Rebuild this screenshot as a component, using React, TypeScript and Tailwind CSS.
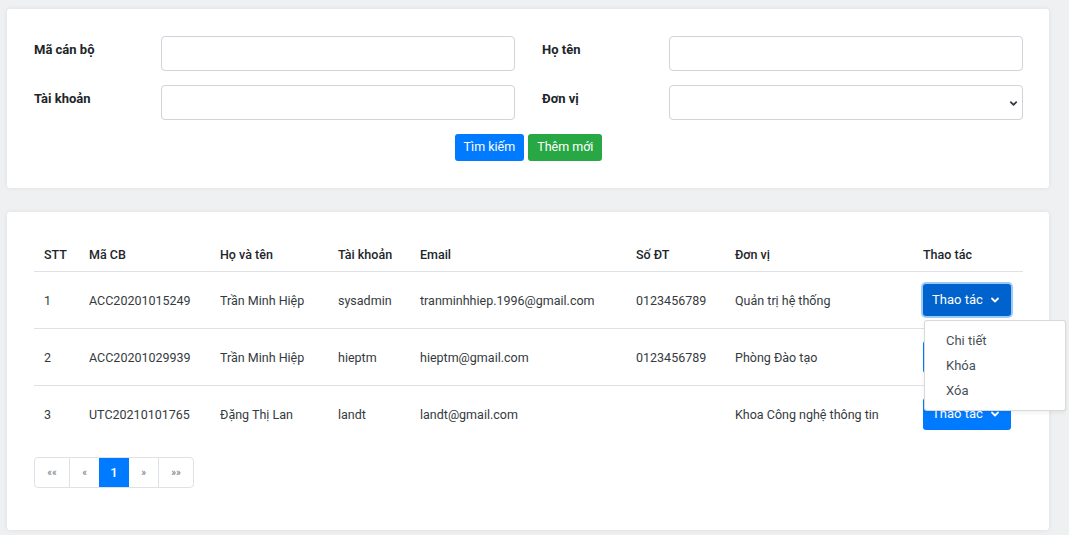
import React from "react";

const rows = [
  { stt: "1", ma: "ACC20201015249", ten: "Trần Minh Hiệp", tk: "sysadmin", email: "tranminhhiep.1996@gmail.com", sdt: "0123456789", dv: "Quản trị hệ thống" },
  { stt: "2", ma: "ACC20201029939", ten: "Trần Minh Hiệp", tk: "hieptm", email: "hieptm@gmail.com", sdt: "0123456789", dv: "Phòng Đào tạo" },
  { stt: "3", ma: "UTC20210101765", ten: "Đặng Thị Lan", tk: "landt", email: "landt@gmail.com", sdt: "", dv: "Khoa Công nghệ thông tin" },
];

const Chevron = () => (
  <svg width="10" height="10" viewBox="0 0 10 10" fill="none" stroke="white" strokeWidth="1.8" strokeLinecap="round" strokeLinejoin="round">
    <path d="M2 3.5 L5 6.5 L8 3.5" />
  </svg>
);

function ActionButton({ active }: { active?: boolean }) {
  return (
    <button
      className={
        active
          ? "h-[32px] w-[88px] rounded-[3px] bg-[#0062cc] text-white text-[13px] flex items-center pl-[9px] gap-[7px] shadow-[0_0_0_2px_#9ccaf8]"
          : "h-[32px] w-[88px] rounded-[3px] bg-[#007bff] text-white text-[13px] flex items-center pl-[9px] gap-[7px]"
      }
    >
      <span>Thao tác</span>
      <Chevron />
    </button>
  );
}

const colW = ["w-[45px]", "w-[131px]", "w-[118px]", "w-[82px]", "w-[216px]", "w-[99px]", "w-[188px]", "w-[110px]"];

export default function App() {
  return (
    <div className="min-h-[535px] bg-[#eef0f1] pt-[9px] pb-[5px]" style={{ fontFamily: "Roboto, 'Noto Sans', sans-serif" }}>
      {/* Search card */}
      <div className="ml-[7px] w-[1042px] bg-white rounded-[3px] shadow-[0_0_5px_rgba(0,0,0,0.08)] pt-[27px] pb-[27px] pl-[27px] pr-[26px]">
        <div className="grid grid-cols-2 gap-x-[27px] gap-y-[14px]">
          {[
            ["Mã cán bộ", false],
            ["Họ tên", false],
            ["Tài khoản", false],
            ["Đơn vị", true],
          ].map(([label, isSelect]) => (
            <div key={label as string} className="flex">
              <div className="w-[127px] pt-[4px] text-[13px] font-bold text-[#212529]">
                {label}
              </div>
              <div className="relative h-[35px] flex-1 rounded-[4px] border border-[#ced4da] bg-white">
                {isSelect ? (
                  <svg className="absolute right-[4px] top-[13px]" width="9" height="9" viewBox="0 0 10 10" fill="none" stroke="#343a40" strokeWidth="2" strokeLinecap="round" strokeLinejoin="round">
                    <path d="M2 3.5 L5 6.5 L8 3.5" />
                  </svg>
                ) : null}
              </div>
            </div>
          ))}
        </div>
        <div className="mt-[14px] flex justify-center gap-[4px]">
          <button className="h-[27px] px-[9px] rounded-[3px] bg-[#007bff] text-white text-[12.5px]">Tìm kiếm</button>
          <button className="h-[27px] px-[9px] rounded-[3px] bg-[#28a745] text-white text-[12.5px]">Thêm mới</button>
        </div>
      </div>

      {/* Table card */}
      <div className="relative ml-[7px] mt-[24px] w-[1042px] h-[318px] bg-white rounded-[3px] shadow-[0_0_5px_rgba(0,0,0,0.08)] px-[27px] pr-[26px] pt-[26px]">
        <table className="w-[989px] table-fixed border-collapse text-[12.5px] text-[#343a40]">
          <thead>
            <tr className="h-[33px] border-b border-[#dee2e6]">
              {["STT", "Mã CB", "Họ và tên", "Tài khoản", "Email", "Số ĐT", "Đơn vị", "Thao tác"].map((h, i) => (
                <th key={h} className={`${colW[i]} text-left font-medium text-[#212529] px-[10px] pt-[2px] align-middle`}>
                  {h}
                </th>
              ))}
            </tr>
          </thead>
          <tbody>
            {rows.map((r, idx) => (
              <tr key={r.stt} className={idx < 2 ? "h-[57px] border-b border-[#dee2e6]" : "h-[57px]"}>
                <td className="px-[10px] pt-[3px]">{r.stt}</td>
                <td className="px-[10px] pt-[3px]">{r.ma}</td>
                <td className="px-[10px] pt-[3px]">{r.ten}</td>
                <td className="px-[10px] pt-[3px]">{r.tk}</td>
                <td className="px-[10px] pt-[3px]">{r.email}</td>
                <td className="px-[10px] pt-[3px]">{r.sdt}</td>
                <td className="px-[10px] pt-[3px]">{r.dv}</td>
                <td className="px-[10px]">
                  <ActionButton active={idx === 0} />
                </td>
              </tr>
            ))}
          </tbody>
        </table>

        {/* Dropdown menu */}
        <div className="absolute left-[917px] top-[108px] w-[142px] h-[91px] bg-white border border-[rgba(0,0,0,0.15)] rounded-[3px] shadow-[0_2px_4px_rgba(0,0,0,0.06)] pt-[10px] text-[13px] text-[#495057]">
          {["Chi tiết", "Khóa", "Xóa"].map((t) => (
            <div key={t} className="h-[25px] leading-[20px] pl-[21px]">
              {t}
            </div>
          ))}
        </div>

        {/* Pagination */}
        <div className="mt-[15px] flex h-[31px] w-fit rounded-[4px] border border-[#dee2e6] overflow-hidden text-[10px] text-[#6c757d]">
          <div className="w-[35px] flex items-center justify-center border-r border-[#dee2e6]">««</div>
          <div className="w-[29px] flex items-center justify-center">«</div>
          <div className="w-[30px] flex items-center justify-center bg-[#007bff] text-white text-[13px] font-medium">1</div>
          <div className="w-[30px] flex items-center justify-center border-r border-[#dee2e6]">»</div>
          <div className="w-[34px] flex items-center justify-center">»»</div>
        </div>
      </div>
    </div>
  );
}
